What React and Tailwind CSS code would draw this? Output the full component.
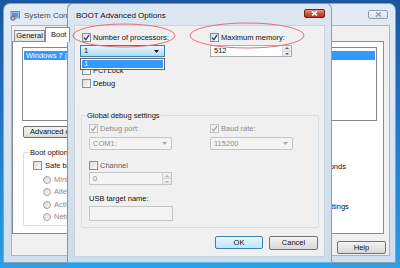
import React from "react";

const FONT = { fontFamily: '"Liberation Sans", Arial, sans-serif' };

function Check({ checked, disabled }) {
  return (
    <span
      className={
        disabled
          ? "relative inline-flex w-[9px] h-[9px] shrink-0 border border-[#c2c2c2] bg-[#f4f4f4]"
          : "relative inline-flex w-[9px] h-[9px] shrink-0 border border-[#8e8f8f] bg-gradient-to-br from-[#dadada] to-[#ffffff]"
      }
    >
      {checked && (
        <svg width="7" height="7" viewBox="0 0 7 7" className="absolute left-0 top-0">
          <path
            d="M1 3.6 L2.7 5.6 L6.2 0.8"
            fill="none"
            stroke={disabled ? "#a8a8a8" : "#243c8c"}
            strokeWidth="1.3"
          />
        </svg>
      )}
    </span>
  );
}

function Radio() {
  return (
    <span className="inline-flex w-[8px] h-[8px] shrink-0 rounded-full border border-[#a2a2a2] bg-gradient-to-br from-[#dcdcdc] to-[#f7f7f7]" />
  );
}

function Arrow({ color }) {
  return (
    <svg width="5" height="3" viewBox="0 0 5 3">
      <path d="M0 0 L5 0 L2.5 3 Z" fill={color} />
    </svg>
  );
}

function SpinArrows({ color }) {
  return (
    <div className="flex flex-col w-[9px] h-full border-l border-[#d4d4d4]">
      <div className="flex-1 flex items-center justify-center bg-gradient-to-b from-[#f6f6f6] to-[#e3e3e3] border-b border-[#d4d4d4]">
        <svg width="4" height="2" viewBox="0 0 4 2">
          <path d="M0 2 L4 2 L2 0 Z" fill={color} />
        </svg>
      </div>
      <div className="flex-1 flex items-center justify-center bg-gradient-to-b from-[#f6f6f6] to-[#e3e3e3]">
        <svg width="4" height="2" viewBox="0 0 4 2">
          <path d="M0 0 L4 0 L2 2 Z" fill={color} />
        </svg>
      </div>
    </div>
  );
}

function CloseX({ color }) {
  return (
    <svg width="7" height="5" viewBox="0 0 7 5">
      <path d="M1 0.5 L6 4.5 M6 0.5 L1 4.5" stroke={color} strokeWidth="1.6" />
    </svg>
  );
}

export default function App() {
  return (
    <div
      className="relative w-[400px] h-[268px] overflow-hidden bg-gradient-to-b from-[#1c56a0] via-[#2479c9] to-[#2a9fe6] text-[7.5px] text-[#111111] leading-none"
      style={FONT}
    >
      {/* Back window: System Configuration */}
      <div className="absolute left-[3px] top-[3px] w-[393px] h-[260px] rounded-t-[7px] border border-[#8aa0b9] bg-gradient-to-b from-[#e2ebf5] to-[#d0dfee] flex flex-col">
        <div className="h-[21px] flex items-start shrink-0">
          <svg width="10" height="10" viewBox="0 0 10 10" className="ml-[6px] mt-[7px] shrink-0">
            <rect x="1" y="0.5" width="8.5" height="6.5" fill="#dfe6ee" stroke="#5d6f86" strokeWidth="0.8" />
            <rect x="2" y="1.5" width="6.5" height="4.5" fill="#5b93d3" />
            <circle cx="3" cy="7.2" r="2.2" fill="#8e99a6" stroke="#4b5563" strokeWidth="0.6" />
            <circle cx="3" cy="7.2" r="0.8" fill="#e5e7eb" />
          </svg>
          <span className="ml-[4px] mt-[8px] whitespace-nowrap text-[8px] text-[#4a4a4a]">System Configuration</span>
          <div className="ml-auto mr-[7px] mt-[6px] w-[20px] h-[9px] rounded-[2px] border border-[#8e9db1] bg-gradient-to-b from-[#f2f5f9] to-[#d9e1ea] flex items-center justify-center">
            <CloseX color="#98a2ae" />
          </div>
        </div>
        <div className="ml-[7px] mr-[5px] mb-[6px] flex-1 bg-[#f0f0f0] flex flex-col border border-[#a8b5c4]">
          {/* tabs */}
          <div className="flex items-end pl-[2px] pt-[1px] h-[15px] shrink-0">
            <div className="w-[31px] h-[11px] border border-[#898c95] border-b-0 bg-gradient-to-b from-[#f2f2f2] to-[#e0e0e0] flex items-center justify-center">
              General
            </div>
            <div className="relative z-10 w-[25px] h-[15px] -mb-[1px] border border-[#898c95] border-b-0 bg-white flex items-center pl-[5px]">
              Boot
            </div>
          </div>
          <div className="w-[372px] h-[193px] border border-[#898c95] bg-white flex flex-col shrink-0">
            <div className="ml-[9px] mt-[5px] w-[355px] h-[74px] border border-[#828790] bg-white pt-[3px]">
              <div className="mx-[1px] h-[9px] bg-[#3399ff] text-white flex items-center pl-[2px] whitespace-nowrap">
                Windows 7 (C:\Windows) : Current OS; Default OS
              </div>
            </div>
            <div className="ml-[10px] mt-[5px] w-[80px] h-[12px] rounded-[2px] border border-[#707070] bg-gradient-to-b from-[#f2f2f2] to-[#dcdcdc] flex items-center pl-[6px] whitespace-nowrap">
              Advanced options...
            </div>
            <div className="flex">
              <div className="ml-[10px] mt-[14px] w-[190px] h-[74px] border border-[#d5dfe5] rounded-[2px] px-[9px]">
                <div className="-mt-[5px] -ml-[4px] w-fit px-[1px] h-[10px] bg-white flex items-center">Boot options</div>
                <div className="flex items-center gap-[3px] mt-[3px] h-[9px]">
                  <Check />
                  <span>Safe boot</span>
                </div>
                <div className="flex flex-col pl-[10px] mt-[5px] gap-[3.5px] text-[#8a8a8a]">
                  <div className="flex items-center gap-[3px] h-[9px]"><Radio /><span>Minimal</span></div>
                  <div className="flex items-center gap-[3px] h-[9px]"><Radio /><span>Alternate shell</span></div>
                  <div className="flex items-center gap-[3px] h-[9px]"><Radio /><span>Active Directory repair</span></div>
                  <div className="flex items-center gap-[3px] h-[9px]"><Radio /><span>Network</span></div>
                </div>
              </div>
              <div className="ml-[105px] flex flex-col">
                <span className="mt-[24px] h-[10px] flex items-center">seconds</span>
                <span className="ml-[5px] mt-[30px] h-[10px] flex items-center">settings</span>
              </div>
            </div>
          </div>
          <div className="flex justify-end pr-[3px] mt-[7px]">
            <div className="w-[49px] h-[13px] rounded-[2px] border border-[#707070] bg-gradient-to-b from-[#f3f3f3] to-[#d8d8d8] flex items-center justify-center">
              Help
            </div>
          </div>
        </div>
      </div>

      {/* Front dialog: BOOT Advanced Options */}
      <div className="absolute left-[67px] top-[3px] w-[265px] h-[260px] rounded-t-[6px] border border-[#8295ad] border-r-[#4fb3ea] border-b-[#62bdf0] bg-gradient-to-b from-[#dde7f2] to-[#cddcec] flex flex-col">
        <div className="h-[21px] flex items-start shrink-0">
          <span className="ml-[8px] mt-[8px] text-[8px] text-[#111111]">BOOT Advanced Options</span>
          <div className="ml-auto mr-[6px] mt-[5px] w-[21px] h-[9px] rounded-[2px] border border-[#6a2418] bg-gradient-to-b from-[#e49a8b] via-[#c9543f] to-[#b3361f] flex items-center justify-center">
            <CloseX color="#ffffff" />
          </div>
        </div>
        <div className="relative mx-[6px] mb-[5px] flex-1 bg-[#f0f0f0] flex flex-col border border-[#c7d3df]">
          <div className="flex pl-[7px] pt-[7px]">
            <div className="w-[128px] flex flex-col">
              <div className="flex items-center gap-[2px] h-[9px]">
                <Check checked />
                <span>Number of processors:</span>
              </div>
              <div className="relative -ml-[2px] mt-[3px] w-[85px] h-[12px] border border-[#3c7fb1] bg-gradient-to-b from-[#eaf6fd] via-[#c9e8f9] to-[#a9daf5] flex items-center pl-[3px] pr-[5px]">
                <span>1</span>
                <span className="ml-auto"><Arrow color="#1a1a1a" /></span>
                <div className="absolute left-[-1px] top-[12px] w-[85px] h-[12px] border border-[#646464] bg-white p-[1px] z-20">
                  <div className="h-full bg-[#3399ff] text-white flex items-center pl-[2px]">1</div>
                </div>
              </div>
              <div className="flex items-center gap-[2px] h-[9px] mt-[9px]">
                <Check />
                <span>PCI Lock</span>
              </div>
              <div className="flex items-center gap-[2px] h-[9px] mt-[4px]">
                <Check />
                <span>Debug</span>
              </div>
            </div>
            <div className="flex flex-col">
              <div className="flex items-center gap-[2px] h-[9px]">
                <Check checked />
                <span>Maximum memory:</span>
              </div>
              <div className="mt-[3px] w-[82px] h-[12px] border border-[#abadb3] bg-white flex items-center">
                <span className="pl-[3px]">512</span>
                <span className="ml-auto h-full"><SpinArrows color="#4d6185" /></span>
              </div>
            </div>
          </div>

          <div className="ml-[6px] mt-[27px] w-[238px] h-[113px] border border-[#d5dfe5] rounded-[2px] px-[7px]">
            <div className="-mt-[6px] -ml-[3px] w-fit px-[1px] h-[11px] bg-[#f0f0f0] flex items-center">Global debug settings</div>
            <div className="flex mt-[3px]">
              <div className="w-[121px] flex flex-col">
                <div className="flex items-center gap-[2px] h-[9px]">
                  <Check checked disabled />
                  <span className="text-[#8d8d8d]">Debug port:</span>
                </div>
                <div className="mt-[4px] w-[83px] h-[13px] rounded-[2px] border border-[#c5c5c5] bg-[#f4f4f4] flex items-center pl-[3px] pr-[4px]">
                  <span className="text-[#8d8d8d]">COM1:</span>
                  <span className="ml-auto"><Arrow color="#a8a8a8" /></span>
                </div>
                <div className="flex items-center gap-[2px] h-[9px] mt-[11px]">
                  <Check />
                  <span className="text-[#5d5d5d]">Channel</span>
                </div>
                <div className="mt-[2px] w-[83px] h-[13px] border border-[#c5c5c5] bg-[#f4f4f4] flex items-center">
                  <span className="pl-[3px] text-[#8d8d8d]">0</span>
                  <span className="ml-auto h-full"><SpinArrows color="#b0b0b0" /></span>
                </div>
                <div className="mt-[9px] h-[10px] flex items-center">USB target name:</div>
                <div className="mt-[2px] w-[84px] h-[15px] border border-[#c5c5c5] bg-[#f4f4f4]" />
              </div>
              <div className="flex flex-col">
                <div className="flex items-center gap-[2px] h-[9px]">
                  <Check checked disabled />
                  <span className="text-[#8d8d8d]">Baud rate:</span>
                </div>
                <div className="mt-[4px] w-[83px] h-[13px] rounded-[2px] border border-[#c5c5c5] bg-[#f4f4f4] flex items-center pl-[3px] pr-[4px]">
                  <span className="text-[#8d8d8d]">115200</span>
                  <span className="ml-auto"><Arrow color="#a8a8a8" /></span>
                </div>
              </div>
            </div>
          </div>

          <div className="flex justify-end gap-[6px] pr-[6px] mt-[8px]">
            <div className="w-[48px] h-[13px] rounded-[2px] border border-[#3c7fb1] bg-gradient-to-b from-[#eaf6fd] to-[#bee6fd] flex items-center justify-center">
              OK
            </div>
            <div className="w-[49px] h-[14px] rounded-[2px] border border-[#707070] bg-gradient-to-b from-[#f3f3f3] to-[#d8d8d8] flex items-center justify-center">
              Cancel
            </div>
          </div>
        </div>
      </div>

      {/* Red annotation ellipses */}
      <svg className="absolute left-0 top-0 pointer-events-none" width="400" height="268">
        <ellipse cx="124" cy="35.5" rx="51" ry="11.5" fill="none" stroke="#e2707c" strokeWidth="1" />
        <ellipse cx="247" cy="35.5" rx="57" ry="12.5" fill="none" stroke="#e2707c" strokeWidth="1" />
      </svg>
    </div>
  );
}
